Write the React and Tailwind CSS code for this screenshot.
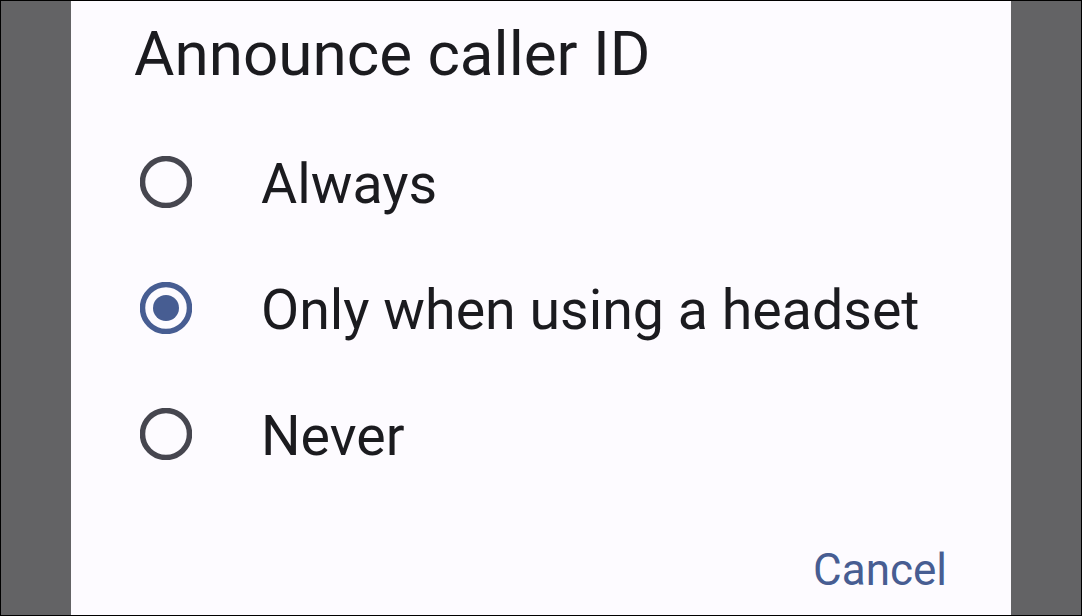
import React from "react";

function Radio({ checked }) {
  return (
    <svg width="52" height="52" viewBox="0 0 52 52" className="shrink-0">
      <circle cx="26" cy="26" r="23.5" fill="none" stroke={checked ? "#475d92" : "#46464f"} strokeWidth="5.5" />
      {checked && <circle cx="26" cy="26" r="13" fill="#475d92" />}
    </svg>
  );
}

export default function App() {
  const options = [
    { label: "Always", checked: false },
    { label: "Only when using a headset", checked: true },
    { label: "Never", checked: false },
  ];
  return (
    <div
      className="w-[1082px] h-[616px] border border-black bg-[#636365] flex overflow-hidden"
      style={{ fontFamily: "Roboto, 'Noto Sans', sans-serif" }}
    >
      <div className="ml-[70px] w-[940px] h-full bg-[#fdfbff] flex flex-col">
        <div className="pl-[63px] pt-[22px] text-[62px] leading-[62px] text-[#1b1b1f]">
          Announce caller ID
        </div>
        <div className="mt-[34px] flex flex-col">
          {options.map((o) => (
            <div key={o.label} className="h-[126px] flex items-center pl-[69px]">
              <Radio checked={o.checked} />
              <span className="ml-[69px] text-[55.5px] leading-[55px] text-[#1b1b1f] translate-y-[2px]">
                {o.label}
              </span>
            </div>
          ))}
        </div>
        <div className="flex justify-end pr-[64px] mt-[51px]">
          <span className="text-[44px] leading-[44px] text-[#475d92]">Cancel</span>
        </div>
      </div>
    </div>
  );
}
